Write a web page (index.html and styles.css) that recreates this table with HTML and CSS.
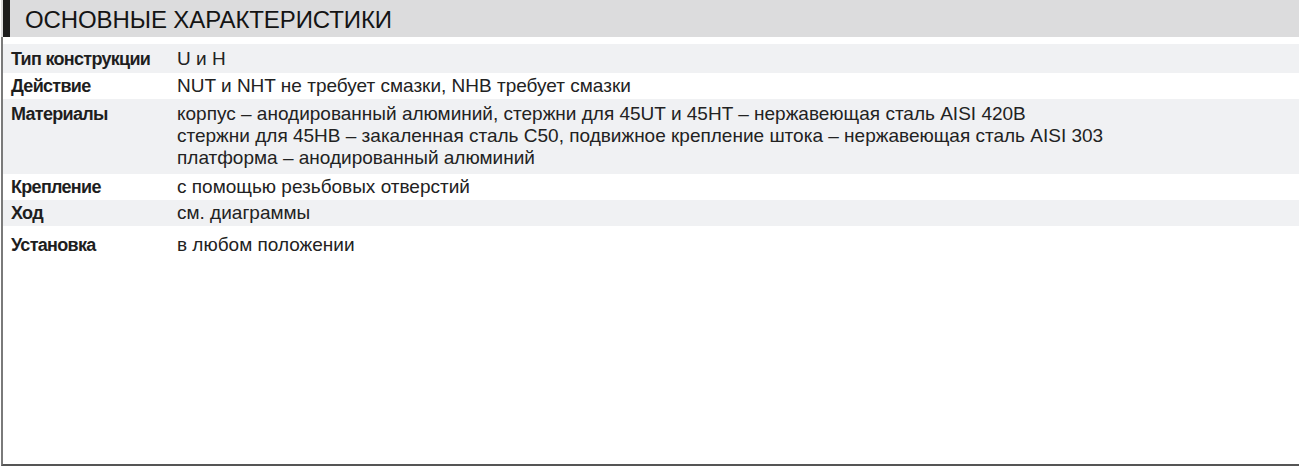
FILE: index.html
```html
<!DOCTYPE html>
<html lang="ru">
<head>
<meta charset="utf-8">
<link rel="stylesheet" href="styles.css">
</head>
<body>
<div class="panel">
  <div class="header"><span class="mark"></span><h1 class="title">ОСНОВНЫЕ ХАРАКТЕРИСТИКИ</h1></div>
  <div class="table">
    <div class="row alt first"><div class="label">Тип конструкции</div><div class="value">U и H</div></div>
    <div class="row"><div class="label">Действие</div><div class="value">NUT и NHT не требует смазки, NHB требует смазки</div></div>
    <div class="row alt multi"><div class="label">Материалы</div><div class="value">корпус – анодированный алюминий, стержни для 45UT и 45HT – нержавеющая сталь AISI 420B<br>стержни для 45HB – закаленная сталь C50, подвижное крепление штока – нержавеющая сталь AISI 303<br>платформа – анодированный алюминий</div></div>
    <div class="row"><div class="label">Крепление</div><div class="value">с помощью резьбовых отверстий</div></div>
    <div class="row alt"><div class="label">Ход</div><div class="value">см. диаграммы</div></div>
    <div class="row last"><div class="label">Установка</div><div class="value">в любом положении</div></div>
  </div>
</div>
</body>
</html>
```

FILE: styles.css
```css
html, body {
  margin: 0;
  padding: 0;
  background: #ffffff;
}
body {
  font-family: "Liberation Sans", Arial, sans-serif;
  color: #1e1e1e;
}
.panel {
  width: 1296px;
  height: 464px;
  border-left: 2px solid #7a7a7a;
  border-bottom: 2px solid #555555;
  margin-left: 1px;
  box-sizing: content-box;
}
.header {
  display: flex;
  align-items: center;
  height: 37px;
  background: #dcdcdd;
  margin-left: -2px;
}
.mark {
  width: 7px;
  height: 37px;
  margin-left: 2px;
  background: #1c1c1c;
}
.title {
  margin: 2px 0 0 15px;
  font-size: 24px;
  font-weight: normal;
  color: #141414;
  letter-spacing: -0.1px;
}
.table {
  margin-top: 7px;
}
.row {
  display: flex;
  padding: 2px 0;
  line-height: 22px;
  font-size: 19px;
}
.row.first {
  padding: 4px 0 3px;
}
.row.multi {
  padding: 4px 0 5px;
}
.row.last {
  padding-top: 8px;
}
.row.alt {
  background: #f0f1f3;
}
.label {
  width: 174px;
  padding-left: 8px;
  box-sizing: border-box;
  font-weight: bold;
  font-size: 18px;
  letter-spacing: -0.7px;
  flex: none;
}
.value {
  color: #222222;
}
```
